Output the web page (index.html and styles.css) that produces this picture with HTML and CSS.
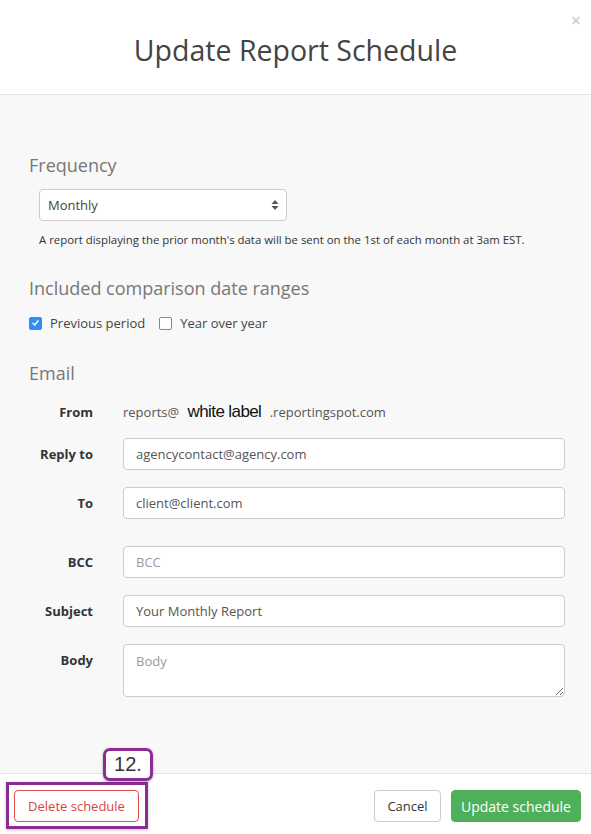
FILE: index.html
```html
<!DOCTYPE html>
<html lang="en">
<head>
  <meta charset="UTF-8" />
  <meta name="viewport" content="width=device-width, initial-scale=1.0"/>
  <title>Update Report Schedule</title>
  <link rel="stylesheet" href="styles.css">
</head>
<body>

  <div class="modal">
    <div class="modal-header">
      <span class="close">&times;</span>
      <h2>Update Report Schedule</h2>
    </div>

    <div class="modal-body">
      <h4 class="section-title first">Frequency</h4>
      <div class="select">
        <span>Monthly</span>
        <svg width="8" height="12" viewBox="0 0 8 12">
          <path d="M4 1 L7.5 5 L0.5 5 Z" fill="#555"/>
          <path d="M4 11 L7.5 7 L0.5 7 Z" fill="#555"/>
        </svg>
      </div>
      <p class="help">A report displaying the prior month's data will be sent on the 1st of each month at 3am EST.</p>

      <h4 class="section-title">Included comparison date ranges</h4>
      <div class="checks">
        <label class="check">
          <span class="box checked">
            <svg width="12" height="12" viewBox="0 0 12 12"><path d="M3.2 6.2 L5.2 8.2 L8.8 3.6" fill="none" stroke="#fff" stroke-width="1.6" stroke-linecap="round" stroke-linejoin="round"/></svg>
          </span>
          Previous period
        </label>
        <label class="check">
          <span class="box"></span>
          Year over year
        </label>
      </div>

      <h4 class="section-title email-title">Email</h4>
      <div class="form">
        <div class="row row-from">
          <span class="label">From</span>
          <span class="from-value">reports@ <span class="white-label">white label</span> .reportingspot.com</span>
        </div>
        <div class="row">
          <span class="label">Reply to</span>
          <input class="input" type="text" value="agencycontact@agency.com">
        </div>
        <div class="row row-wide">
          <span class="label">To</span>
          <input class="input" type="text" value="client@client.com">
        </div>
        <div class="row">
          <span class="label">BCC</span>
          <input class="input" type="text" placeholder="BCC">
        </div>
        <div class="row">
          <span class="label">Subject</span>
          <input class="input" type="text" value="Your Monthly Report">
        </div>
        <div class="row">
          <span class="label">Body</span>
          <textarea class="input textarea" placeholder="Body"></textarea>
        </div>
      </div>
    </div>

    <div class="modal-footer">
      <div class="callout">
        <span class="badge">12.</span>
        <button class="btn btn-delete">Delete schedule</button>
      </div>
      <div class="actions">
        <button class="btn btn-default">Cancel</button>
        <button class="btn btn-success">Update schedule</button>
      </div>
    </div>
  </div>

</body>
</html>
```

FILE: styles.css
```css
body {
  margin: 0;
  background-color: #ffffff;
  font-family: 'Open Sans', 'Lato', sans-serif;
  color: #333;
}

.modal {
  width: 591px;
  height: 834px;
  display: flex;
  flex-direction: column;
  overflow: hidden;
}

.modal-header {
  position: relative;
  height: 94px;
  flex-shrink: 0;
  border-bottom: 1px solid #e5e5e5;
  display: flex;
  align-items: center;
  justify-content: center;
}

.modal-header h2 {
  margin: 6px 0 0;
  font-size: 28.5px;
  font-weight: 400;
  color: #444;
}

.close {
  position: absolute;
  top: 8px;
  right: 10px;
  font-size: 18px;
  color: #c4c4c4;
}

.modal-body {
  background-color: #f8f8f8;
  padding: 59px 26px 75px 29px;
  flex: 1;
}

.section-title {
  margin: 30px 0 0;
  font-size: 18px;
  line-height: 22px;
  font-weight: 400;
  color: #777;
}

.section-title.first {
  margin-top: 0;
}

.section-title.email-title {
  margin-top: 31px;
}

.select {
  margin: 13px 0 0 10px;
  width: 248px;
  height: 32px;
  box-sizing: border-box;
  background-color: #fff;
  border: 1px solid #ccc;
  border-radius: 4px;
  display: flex;
  align-items: center;
  justify-content: space-between;
  padding: 0 7px 0 8px;
  font-size: 13px;
  color: #444;
}

.help {
  margin: 11px 0 0 10px;
  font-size: 11.4px;
  line-height: 15px;
  color: #333;
}

.checks {
  display: flex;
  gap: 14px;
  margin-top: 16px;
  font-size: 13px;
  line-height: 16px;
  color: #444;
}

.check {
  display: flex;
  align-items: center;
  gap: 8px;
}

.box {
  width: 11px;
  height: 11px;
  border: 1px solid #888;
  border-radius: 2px;
  background-color: #fff;
  display: flex;
  align-items: center;
  justify-content: center;
}

.box.checked {
  background-color: #2f8df5;
  border-color: #2f8df5;
}

.form {
  margin-top: 12px;
}

.row {
  display: grid;
  grid-template-columns: 64px 1fr;
  column-gap: 30px;
  align-items: start;
  margin-bottom: 17px;
}

.row:last-child {
  margin-bottom: 0;
}

.row-from {
  margin-bottom: 10px;
  align-items: center;
  height: 32px;
}

.row-wide {
  margin-bottom: 27px;
}

.label {
  text-align: right;
  font-weight: 700;
  font-size: 13px;
  line-height: 32px;
  color: #333;
}

.from-value {
  font-size: 13px;
  color: #555;
}

.white-label {
  font-family: 'Liberation Sans', Arial, sans-serif;
  font-size: 17px;
  color: #111;
  letter-spacing: -0.6px;
  margin: 0 5px;
}

.input {
  height: 32px;
  box-sizing: border-box;
  width: 100%;
  border: 1px solid #ccc;
  border-radius: 4px;
  background-color: #fff;
  padding: 0 12px;
  font-family: inherit;
  font-size: 13px;
  color: #555;
  margin: 0;
}

.input::placeholder {
  color: #999;
}

.textarea {
  height: 53px;
  padding: 7px 12px;
  resize: vertical;
  display: block;
}

.modal-footer {
  border-top: 1px solid #e5e5e5;
  height: 61px;
  flex-shrink: 0;
  display: flex;
  align-items: flex-start;
  justify-content: space-between;
  padding: 8px 10px 0 6px;
  box-sizing: border-box;
}

.callout {
  position: relative;
  border: 3px solid #8c2b96;
  padding: 5px 6px 4px 5px;
  box-shadow: 0 1px 3px rgba(0, 0, 0, 0.25);
  display: flex;
}

.badge {
  position: absolute;
  left: 94px;
  top: -37px;
  width: 44px;
  height: 27px;
  background-color: #fff;
  border: 3px solid #8c2b96;
  border-radius: 7px;
  box-shadow: 0 1px 3px rgba(0, 0, 0, 0.3);
  font-family: 'Liberation Sans', Arial, sans-serif;
  font-size: 20px;
  line-height: 27px;
  text-align: center;
  color: #333;
}

.actions {
  display: flex;
  gap: 10px;
  padding-top: 8px;
}

.btn {
  height: 32px;
  border-radius: 4px;
  font-family: inherit;
  font-size: 13px;
  padding: 0;
  white-space: nowrap;
  cursor: pointer;
  background-color: #fff;
}

.btn-delete {
  width: 125px;
  border: 1px solid #e0504a;
  color: #d9443d;
}

.btn-default {
  width: 67px;
  border: 1px solid #ccc;
  color: #333;
}

.btn-success {
  width: 130px;
  border: 1px solid #4cae58;
  background-color: #4fb05b;
  color: #fff;
  font-size: 14px;
}
```
